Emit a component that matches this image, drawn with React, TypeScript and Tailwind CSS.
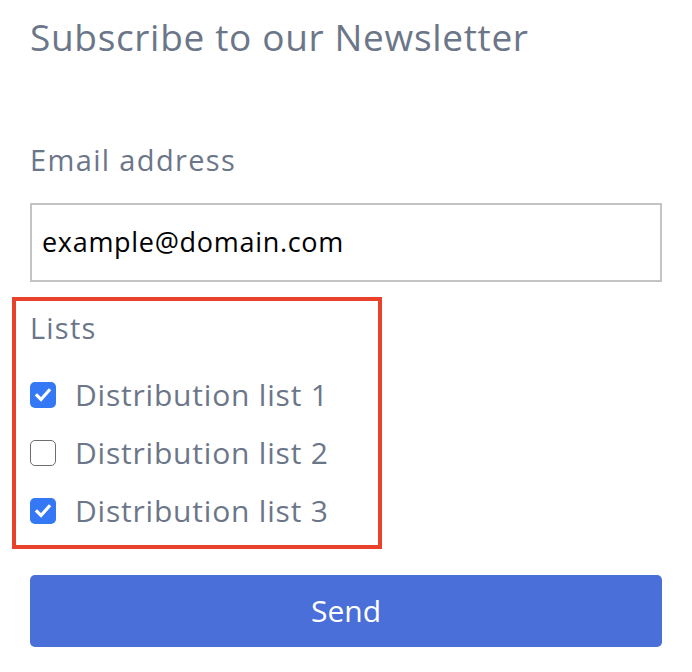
import React from "react";

function Box({ checked }: { checked: boolean }) {
  if (checked) {
    return (
      <span className="flex h-[26px] w-[26px] shrink-0 items-center justify-center rounded-[5px] bg-[#3478f6]">
        <svg width="26" height="26" viewBox="0 0 26 26">
          <path d="M7 13.5 L11 17.5 L19 8.5" fill="none" stroke="#fff" strokeWidth="3.2" strokeLinecap="square" strokeLinejoin="miter" />
        </svg>
      </span>
    );
  }
  return <span className="h-[26px] w-[26px] shrink-0 rounded-[5px] border-[1.5px] border-[#6e6e6e] bg-white" />;
}

export default function App() {
  const items = [
    { label: "Distribution list 1", checked: true },
    { label: "Distribution list 2", checked: false },
    { label: "Distribution list 3", checked: true },
  ];
  return (
    <div
      className="h-[672px] w-[692px] bg-white pl-[30px] pr-[30px] pt-[18px]"
      style={{ fontFamily: '"Open Sans", "Noto Sans", sans-serif' }}
    >
      <h1 className="text-[37px] font-normal leading-none tracking-[0.67px] text-[#6c7689]">Subscribe to our Newsletter</h1>
      <div className="mt-[90px] text-[29px] leading-none tracking-[1.35px] text-[#6c7689]">Email address</div>
      <div className="mt-[29px] flex h-[79px] w-[632px] items-center border-2 border-[#c4c4c4] px-[10px] text-[27px] tracking-[0.7px] text-black">
        example@domain.com
      </div>
      <div className="-ml-[18px] mt-[15px] w-[370px] border-4 border-[#e8422d] pb-[19px] pl-[14px] pt-[12px]">
        <div className="text-[29px] leading-none tracking-[1.2px] text-[#6c7689]">Lists</div>
        <div className="mt-[38px] flex flex-col gap-[28px]">
          {items.map((it) => (
            <div key={it.label} className="flex h-[30px] items-center gap-[19px]">
              <Box checked={it.checked} />
              <span className="text-[30px] leading-none tracking-[0.8px] text-[#6c7689]">{it.label}</span>
            </div>
          ))}
        </div>
      </div>
      <button className="mt-[26px] flex h-[72px] w-[632px] items-center justify-center rounded-[5px] bg-[#4a6fd9] text-[30px] leading-none text-white">
        Send
      </button>
    </div>
  );
}
